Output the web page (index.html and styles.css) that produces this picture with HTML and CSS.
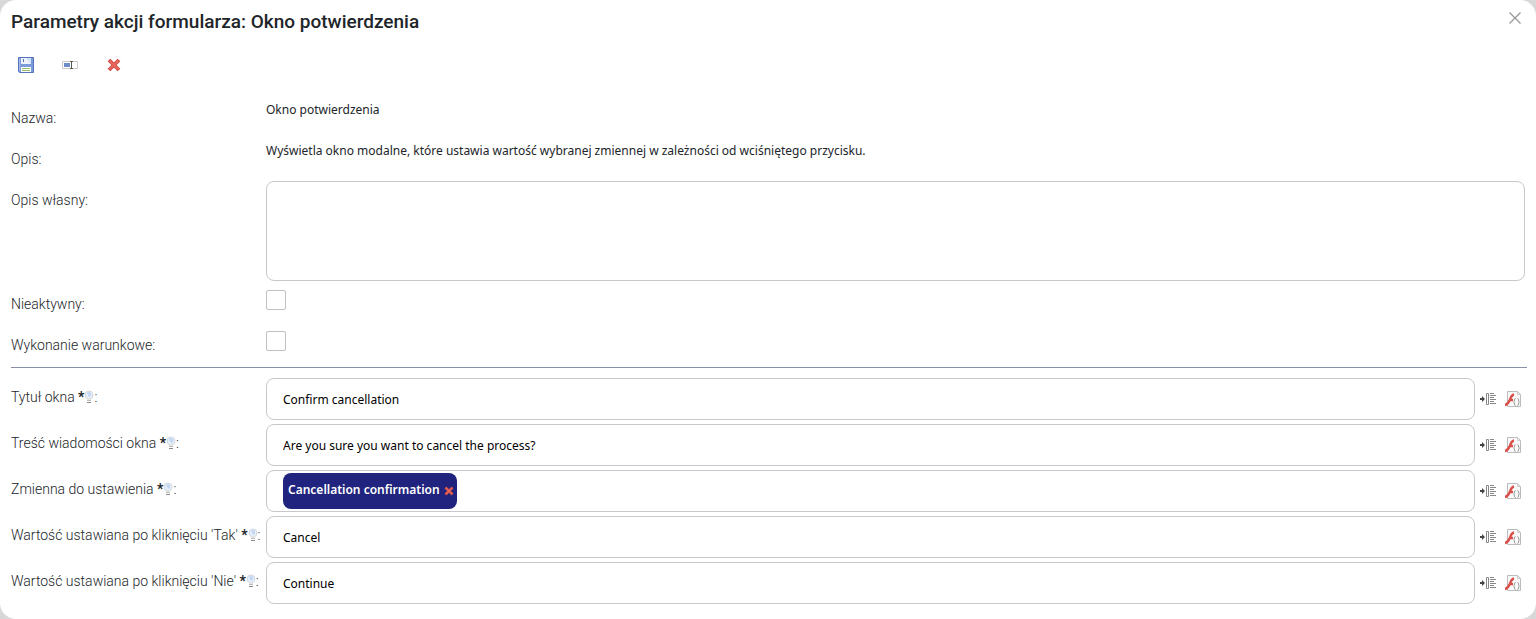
FILE: index.html
```html
<!DOCTYPE html>
<html lang="pl">
<head>
  <meta charset="UTF-8">
  <meta name="viewport" content="width=device-width, initial-scale=1.0">
  <title>Parametry akcji formularza</title>
  <link rel="stylesheet" href="styles.css">
</head>
<body>
  <!-- Shared icons -->
  <svg class="sprite" aria-hidden="true">
    <symbol id="bulb" viewBox="0 0 10 14">
      <circle cx="5" cy="5" r="4" fill="#e6eefa" stroke="#d3d8e0"/>
      <path d="M3 3q2-2 4 0v3L5 7z" fill="#c3d6f2"/>
      <path d="M3 8h4v3H3z" fill="#e3e3e3"/>
      <path d="M3 10.500h4" stroke="#bbb"/>
      <path d="M3 12.500h4" stroke="#888"/>
    </symbol>
    <symbol id="insert" viewBox="0 0 16 16">
      <path d="M0 7h2V5l3 3-3 3V9H0z" fill="#444"/>
      <path d="M6.500 2.500h2v11h-2z" fill="#fff" stroke="#888"/>
      <path d="M10 2.500h4M10 4.500h6M10 6.500h4M10 8.500h6M10 10.500h4M10 12.500h6" stroke="#888"/>
    </symbol>
    <symbol id="script" viewBox="0 0 16 16">
      <path d="M2.500 .5h10l3 3v12h-13z" fill="#fafafa" stroke="#bbb"/>
      <path d="M12.500 .5v3h3" fill="none" stroke="#ccc"/>
      <path d="M9 3.500C6 4 6 6.500 4.500 9.500 3.500 12 2.500 13.500 0 14M4 9h4" fill="none" stroke="#d9504a" stroke-width="2.400"/>
      <path d="M10.500 7.500q-1 0-1 1.500 0 1.500-1 2 1 .5 1 2 0 1.500 1 1.500M12.500 7.500q1 0 1 1.500 0 1.500 1 2-1 .5-1 2 0 1.500-1 1.500" fill="none" stroke="#999"/>
    </symbol>
    <symbol id="cross" viewBox="0 0 14 14">
      <path d="M2 2l10 10M12 2L2 12" stroke="#d0443e" stroke-width="3.800"/>
      <path d="M2.500 2.500l9 9M11.500 2.500l-9 9" stroke="#e4685f" stroke-width="2"/>
    </symbol>
  </svg>

  <main class="modal">
    <header class="modal-header">
      <h1>Parametry akcji formularza: Okno potwierdzenia</h1>
      <button type="button" class="close" aria-label="Zamknij">
        <svg width="12" height="12" viewBox="0 0 12 12"><path d="M.5.5l11 11M11.500.5l-11 11" stroke="#999" stroke-width="1.300"/></svg>
      </button>
    </header>

    <div class="toolbar">
      <button type="button" aria-label="Zapisz">
        <svg width="16" height="16" viewBox="0 0 16 16">
          <path d="M.5 .5h15v15h-14l-1-1z" fill="#7d9adb" stroke="#5673bc"/>
          <path d="M1.500 1.500v12" stroke="#a9bdec"/>
          <path d="M3 1h10v6H3z" fill="#eef3fb"/>
          <path d="M8 1h5v6z" fill="#d3e1f5"/>
          <path d="M5.500 2v3" stroke="#5873b5"/>
          <path d="M3 10h10v5H3z" fill="#fff"/>
          <path d="M4 11.500h8M4 13.500h8" stroke="#96c068"/>
        </svg>
      </button>
      <button type="button" aria-label="Zmień nazwę">
        <svg width="16" height="16" viewBox="0 0 16 16">
          <path d="M.5 4.500h15v7H.5z" fill="#fff" stroke="#ccc"/>
          <path d="M2 6h6v4H2z" fill="#6e8cc8"/>
          <path d="M8 4.500h3M8 11.500h3M9.500 4.500v7" stroke="#555"/>
        </svg>
      </button>
      <button type="button" aria-label="Usuń">
        <svg width="14" height="14"><use href="#cross"/></svg>
      </button>
    </div>

    <form>
      <div class="row">
        <span class="label">Nazwa:</span>
        <span class="text">Okno potwierdzenia</span>
      </div>
      <div class="row">
        <span class="label">Opis:</span>
        <span class="text">Wyświetla okno modalne, które ustawia wartość wybranej zmiennej w zależności od wciśniętego przycisku.</span>
      </div>
      <div class="row">
        <label class="label" for="opis">Opis własny:</label>
        <textarea id="opis"></textarea>
      </div>
      <div class="row">
        <label class="label" for="nieaktywny">Nieaktywny:</label>
        <input type="checkbox" id="nieaktywny">
      </div>
      <div class="row">
        <label class="label" for="warunkowe">Wykonanie warunkowe:</label>
        <input type="checkbox" id="warunkowe">
      </div>

      <hr>

      <div class="param">
        <label class="label" for="tytul">Tytuł okna <b>*</b><svg class="bulb"><use href="#bulb"/></svg>:</label>
        <input type="text" class="field" id="tytul" value="Confirm cancellation">
        <button type="button" aria-label="Wstaw zmienną"><svg width="16" height="16"><use href="#insert"/></svg></button>
        <button type="button" aria-label="Wstaw funkcję"><svg width="16" height="16"><use href="#script"/></svg></button>
      </div>
      <div class="param">
        <label class="label" for="tresc">Treść wiadomości okna <b>*</b><svg class="bulb"><use href="#bulb"/></svg>:</label>
        <input type="text" class="field" id="tresc" value="Are you sure you want to cancel the process?">
        <button type="button" aria-label="Wstaw zmienną"><svg width="16" height="16"><use href="#insert"/></svg></button>
        <button type="button" aria-label="Wstaw funkcję"><svg width="16" height="16"><use href="#script"/></svg></button>
      </div>
      <div class="param">
        <label class="label" for="zmienna">Zmienna do ustawienia <b>*</b><svg class="bulb"><use href="#bulb"/></svg>:</label>
        <div class="field tags">
          <span class="tag">Cancellation confirmation
            <button type="button" aria-label="Usuń zmienną"><svg width="10" height="10"><use href="#cross"/></svg></button>
          </span>
          <input type="text" id="zmienna">
        </div>
        <button type="button" aria-label="Wstaw zmienną"><svg width="16" height="16"><use href="#insert"/></svg></button>
        <button type="button" aria-label="Wstaw funkcję"><svg width="16" height="16"><use href="#script"/></svg></button>
      </div>
      <div class="param">
        <label class="label" for="tak">Wartość ustawiana po kliknięciu 'Tak' <b>*</b><svg class="bulb"><use href="#bulb"/></svg>:</label>
        <input type="text" class="field" id="tak" value="Cancel">
        <button type="button" aria-label="Wstaw zmienną"><svg width="16" height="16"><use href="#insert"/></svg></button>
        <button type="button" aria-label="Wstaw funkcję"><svg width="16" height="16"><use href="#script"/></svg></button>
      </div>
      <div class="param">
        <label class="label" for="nie">Wartość ustawiana po kliknięciu 'Nie' <b>*</b><svg class="bulb"><use href="#bulb"/></svg>:</label>
        <input type="text" class="field" id="nie" value="Continue">
        <button type="button" aria-label="Wstaw zmienną"><svg width="16" height="16"><use href="#insert"/></svg></button>
        <button type="button" aria-label="Wstaw funkcję"><svg width="16" height="16"><use href="#script"/></svg></button>
      </div>
    </form>
  </main>
</body>
</html>
```

FILE: styles.css
```css
* {
  box-sizing: border-box;
}

body {
  margin: 0;
  background: #d8d8d8;
  color: #212529;
  font-family: "Noto Sans", sans-serif;
  font-size: 12px;
}

.sprite {
  display: none;
}

.modal {
  min-height: 100vh;
  padding: 0 9px 11px 11px;
  background: #fff;
  border-radius: 16px;
}

button {
  display: flex;
  align-items: center;
  justify-content: center;
  padding: 0;
  border: none;
  background: none;
  cursor: pointer;
}

.modal-header {
  display: flex;
  align-items: center;
  justify-content: space-between;
  height: 42px;
}

h1 {
  margin: 0;
  font-family: Roboto, sans-serif;
  font-size: 19px;
  font-weight: 500;
}

.close {
  width: 24px;
  height: 24px;
  margin-bottom: 6px;
}

.toolbar {
  display: flex;
  gap: 14px;
  height: 57px;
  padding-top: 8px;
}

.toolbar button {
  width: 30px;
  height: 30px;
}

.row {
  display: grid;
  grid-template-columns: 255px 1fr;
  align-items: start;
  min-height: 41px;
  padding-right: 2px;
}

.label {
  color: #212529;
  font-family: Roboto, sans-serif;
  font-size: 14px;
  font-weight: 300;
  line-height: 38px;
  white-space: nowrap;
}

.label b {
  font-weight: 700;
}

.bulb {
  width: 10px;
  height: 14px;
  vertical-align: -2px;
}

.text {
  line-height: 22px;
}

textarea {
  width: 100%;
  height: 100px;
  margin-bottom: 4px;
  padding: 8px 16px;
  border: 1px solid #c8c8cc;
  border-radius: 8px;
  font: inherit;
  resize: none;
}

input[type="checkbox"] {
  appearance: none;
  width: 20px;
  height: 20px;
  margin: 5px 0 0;
  border: 1px solid #c0c0c4;
  border-radius: 2px;
  background: #fff;
}

input[type="checkbox"]:checked {
  background: #20247e;
}

hr {
  height: 1px;
  margin: 0 0 10px;
  border: none;
  background: #8a8fa8;
}

.param {
  display: grid;
  grid-template-columns: 255px 1fr 26px 24px;
  align-items: start;
  margin-bottom: 4px;
  padding-right: 2px;
}

.param > button {
  height: 42px;
}

.field {
  width: 100%;
  height: 42px;
  padding: 0 16px;
  border: 1px solid #c8c8cc;
  border-radius: 8px;
  background: #fff;
  color: #000;
  font: inherit;
}

.tags {
  display: flex;
  padding-top: 2px;
}

.tags input {
  flex: 1;
  border: none;
  height: 36px;
  outline: none;
}

.tag {
  display: flex;
  gap: 4px;
  height: 36px;
  padding: 0 3px 0 5px;
  border-radius: 8px;
  background: #20247e;
  color: #fff;
  font-weight: 600;
  line-height: 34px;
}
```
